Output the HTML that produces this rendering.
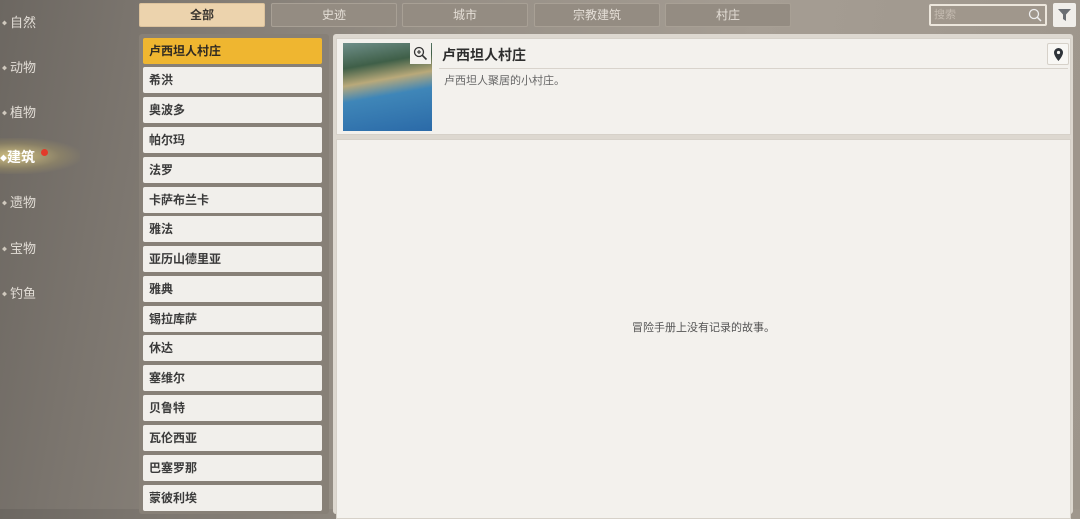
<!DOCTYPE html>
<html><head><meta charset="utf-8"><style>
*{margin:0;padding:0;box-sizing:border-box}
body{width:1080px;height:509px;overflow:hidden;position:relative;font-family:"Liberation Sans","Noto Sans CJK SC",sans-serif;
background:linear-gradient(100deg,#6c6761 0%,#7b756e 12%,#948d84 35%,#a59d93 65%,#9d958b 100%);}
.nav{position:absolute;left:2px;color:#e2ddd6;font-size:13px}
.nav:before{content:"◆";font-size:5px;color:#cfc8bd;margin-right:3px;vertical-align:middle}
.tab{position:absolute;top:3px;height:24px;width:126px;background:#948c82;border:1px solid #a8a095;color:#e5dfd7;font-size:12px;text-align:center;line-height:22px;border-radius:2px}
.tab.on{background:#ecd3ad;color:#3a3530;font-weight:bold;border-color:#dcc29c}
.list{position:absolute;left:139px;top:34px;width:190px;height:480px;background:#878077;border-radius:3px}
.it{position:absolute;left:4px;width:179px;height:26px;background:#f1efeb;border-radius:2px;font-size:12px;font-weight:bold;color:#3b3b3b;line-height:26px;padding-left:6px}
.it.on{background:#efb630;color:#2f2a22}
.rp{position:absolute;left:333px;top:34px;width:740px;height:480px;background:#ddd8d0;border-radius:3px}
.card{position:absolute;left:3px;width:735px;background:#f3f1ed;border:1px solid #d6d1c9}
</style></head><body>
<div style="position:absolute;left:0;top:138px;width:80px;height:36px;background:radial-gradient(ellipse at 15% 50%,rgba(240,220,140,.75),rgba(200,180,100,.25) 50%,rgba(0,0,0,0) 75%)"></div>
<div class="nav" style="top:12px">自然</div>
<div class="nav" style="top:57px">动物</div>
<div class="nav" style="top:102px">植物</div>
<div style="position:absolute;left:0;top:147px;color:#fff;font-size:14px;font-weight:bold"><span style="font-size:7px;vertical-align:middle">◆</span>建筑</div>
<div style="position:absolute;left:41px;top:149px;width:7px;height:7px;border-radius:50%;background:#e23a2a"></div>
<div class="nav" style="top:192px">遗物</div>
<div class="nav" style="top:238px">宝物</div>
<div class="nav" style="top:283px">钓鱼</div>

<div class="tab on" style="left:139px">全部</div>
<div class="tab" style="left:271px">史迹</div>
<div class="tab" style="left:402px">城市</div>
<div class="tab" style="left:534px">宗教建筑</div>
<div class="tab" style="left:665px">村庄</div>

<div style="position:absolute;left:929px;top:4px;width:118px;height:22px;border:2px solid #ece6dc;background:#a0978c;border-radius:2px;color:#c4bbb0;font-size:11px;line-height:18px;padding-left:3px">搜索
<svg style="position:absolute;right:3px;top:2px" width="14" height="14" viewBox="0 0 14 14"><circle cx="6" cy="6" r="4.5" fill="none" stroke="#eee" stroke-width="1.3"/><path d="M9.2 9.2L13 13" stroke="#eee" stroke-width="1.5"/></svg></div>
<div style="position:absolute;left:1053px;top:3px;width:23px;height:24px;background:#f0eeea;border-radius:2px"><svg style="position:absolute;left:5px;top:6px" width="13" height="12" viewBox="0 0 13 12"><path d="M0 0H13L8 5.5V12L5 10V5.5Z" fill="#6a6e73"/></svg></div>

<div class="list">
<div class="it on" style="top:4px">卢西坦人村庄</div>
<div class="it" style="top:33px">希洪</div>
<div class="it" style="top:63px">奥波多</div>
<div class="it" style="top:93px">帕尔玛</div>
<div class="it" style="top:123px">法罗</div>
<div class="it" style="top:153px">卡萨布兰卡</div>
<div class="it" style="top:182px">雅法</div>
<div class="it" style="top:212px">亚历山德里亚</div>
<div class="it" style="top:242px">雅典</div>
<div class="it" style="top:272px">锡拉库萨</div>
<div class="it" style="top:301px">休达</div>
<div class="it" style="top:331px">塞维尔</div>
<div class="it" style="top:361px">贝鲁特</div>
<div class="it" style="top:391px">瓦伦西亚</div>
<div class="it" style="top:421px">巴塞罗那</div>
<div class="it" style="top:451px">蒙彼利埃</div>
</div>

<div class="rp">
<div class="card" style="top:4px;height:97px">
<div style="position:absolute;left:6px;top:4px;width:89px;height:88px;background:linear-gradient(170deg,#6f8f8a 0%,#3f5f48 25%,#b9a97a 42%,#3f86b8 58%,#2b6aa8 100%)"></div>
<div style="position:absolute;left:73px;top:4px;width:21px;height:21px;background:#f3f1ed"><svg style="position:absolute;left:3px;top:3px" width="15" height="15" viewBox="0 0 15 15"><circle cx="6" cy="6" r="4.5" fill="none" stroke="#333" stroke-width="1.3"/><path d="M9.3 9.3L13.5 13.5" stroke="#333" stroke-width="1.6"/><path d="M4 6H8M6 4V8" stroke="#333" stroke-width="1.1"/></svg></div>
<div style="position:absolute;left:105px;top:6px;font-size:14px;font-weight:bold;color:#2e2e2e">卢西坦人村庄</div>
<div style="position:absolute;left:102px;top:29px;width:629px;height:1px;background:#d8d3cc"></div>
<div style="position:absolute;left:107px;top:33px;font-size:11px;color:#666">卢西坦人聚居的小村庄。</div>
<div style="position:absolute;left:710px;top:4px;width:22px;height:22px;background:#f8f7f4;border:1px solid #d6d1c9;border-radius:2px"><svg style="position:absolute;left:6px;top:4px" width="9" height="13" viewBox="0 0 9 13"><path d="M4.5 0A4.5 4.5 0 0 0 0 4.5C0 8 4.5 13 4.5 13S9 8 9 4.5A4.5 4.5 0 0 0 4.5 0Z" fill="#2f343a"/><circle cx="4.5" cy="4.5" r="1.6" fill="#f8f7f4"/></svg></div>
</div>
<div class="card" style="top:105px;height:380px">
<div style="position:absolute;left:0;right:0;top:179px;text-align:center;font-size:11px;color:#555">冒险手册上没有记录的故事。</div>
</div>
</div>
</body></html>
